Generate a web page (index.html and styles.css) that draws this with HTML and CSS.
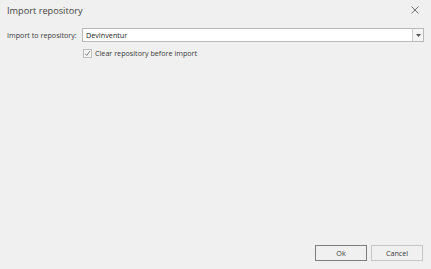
FILE: index.html
```html
<!DOCTYPE html>
<html>
<head>
<meta charset="utf-8">
<link rel="stylesheet" href="styles.css">
</head>
<body>
<div class="dialog">
  <div class="titlebar">
    <span class="title">Import repository</span>
    <svg class="close" width="8" height="8" viewBox="0 0 8 8"><path d="M0.5 0.5L7.5 7.5M7.5 0.5L0.5 7.5" stroke="#707070" stroke-width="1" fill="none"/></svg>
  </div>
  <div class="form">
    <div class="row">
      <label class="label">Import to repository:</label>
      <div class="combo">
        <span class="combo-text">DevInventur</span>
        <span class="combo-btn"><svg width="5" height="3" viewBox="0 0 5 3"><path d="M0 0H5L2.5 3Z" fill="#555"/></svg></span>
      </div>
    </div>
    <div class="row check-row">
      <span class="checkbox"><svg width="9" height="9" viewBox="0 0 9 9"><path d="M1.5 4.8L3.5 7L7.5 1.5" stroke="#5f5f5f" stroke-width="1" fill="none"/></svg></span>
      <span class="check-label">Clear repository before import</span>
    </div>
  </div>
  <div class="footer">
    <button class="btn btn-default">Ok</button>
    <button class="btn">Cancel</button>
  </div>
</div>
</body>
</html>
```

FILE: styles.css
```css
html, body {
  margin: 0;
  padding: 0;
  background: #f0f0f0;
}
.dialog {
  width: 431px;
  height: 269px;
  display: flex;
  flex-direction: column;
  font-family: "Open Sans", "Noto Sans", sans-serif;
  color: #3a3a3a;
  box-sizing: border-box;
}
.titlebar {
  display: flex;
  justify-content: space-between;
  align-items: center;
  height: 20px;
  padding: 0 12px 0 7px;
}
.title {
  font-size: 9.2px;
  color: #444;
}
.form {
  display: flex;
  flex-direction: column;
  padding: 8px 7px 0 7px;
  gap: 4px;
}
.row {
  display: flex;
  align-items: center;
}
.label {
  font-size: 7.2px;
  width: 75px;
  color: #3a3a3a;
}
.combo {
  flex: 1;
  height: 14px;
  box-sizing: border-box;
  border: 1px solid #b9b9b9;
  background: #fff;
  display: flex;
  align-items: center;
}
.combo-text {
  flex: 1;
  font-size: 7.2px;
  padding-left: 3px;
  color: #222;
}
.combo-btn {
  width: 10px;
  height: 12px;
  border-left: 1px solid #cfcfcf;
  background: #f5f5f5;
  display: flex;
  align-items: center;
  justify-content: center;
}
.check-row {
  padding-left: 76px;
  height: 14px;
}
.checkbox {
  width: 9px;
  height: 9px;
  box-sizing: border-box;
  border: 1px solid #bdbdbd;
  background: #f7f7f7;
  display: flex;
  align-items: center;
  justify-content: center;
  margin-right: 3px;
}
.checkbox svg {
  width: 7px;
  height: 7px;
}
.check-label {
  font-size: 7.2px;
  color: #3a3a3a;
}
.footer {
  margin-top: auto;
  display: flex;
  justify-content: flex-end;
  gap: 4px;
  padding: 0 8px 8px 0;
}
.btn {
  width: 52px;
  height: 16px;
  box-sizing: border-box;
  border: 1px solid #c6c6c6;
  background: #f0f0f0;
  font-family: "Open Sans", "Noto Sans", sans-serif;
  font-size: 7.2px;
  color: #3a3a3a;
  padding: 0;
}
.btn-default {
  border-color: #7e7e7e;
}
```
